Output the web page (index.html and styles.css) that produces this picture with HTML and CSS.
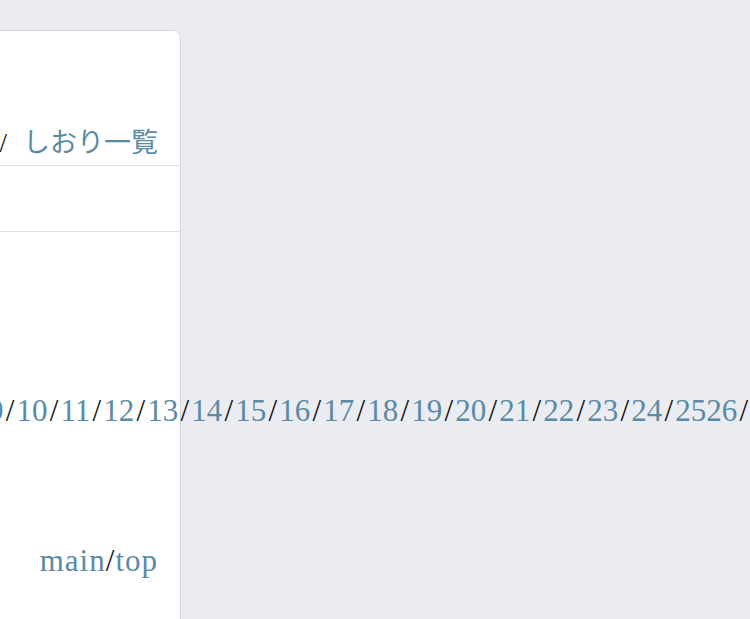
FILE: index.html
```html
<!DOCTYPE html>
<html lang="ja">
<head>
    <meta charset="UTF-8">
    <meta name="viewport" content="width=device-width, initial-scale=1.0">
    <title>しおり一覧</title>
    <link rel="stylesheet" href="styles.css">
</head>
<body>
    <div class="card">
        <div class="card-head">
            <a href="#">目次</a> <span class="head-sep">/</span><a href="#">しおり一覧</a>
        </div>
        <div class="card-sub"></div>
        <div class="card-body">
            <div class="pages">
                <a href="#">1</a><span class="sep">/</span><a href="#">2</a><span class="sep">/</span><a href="#">3</a><span class="sep">/</span><a href="#">4</a><span class="sep">/</span><a href="#">5</a><span class="sep">/</span><a href="#">6</a><span class="sep">/</span><a href="#">7</a><span class="sep">/</span><a href="#">8</a><span class="sep">/</span><a href="#">9</a><span class="sep">/</span><a href="#">10</a><span class="sep">/</span><a href="#">11</a><span class="sep">/</span><a href="#">12</a><span class="sep">/</span><a href="#">13</a><span class="sep">/</span><a href="#">14</a><span class="sep">/</span><a href="#">15</a><span class="sep">/</span><a href="#">16</a><span class="sep">/</span><a href="#">17</a><span class="sep">/</span><a href="#">18</a><span class="sep">/</span><a href="#">19</a><span class="sep">/</span><a href="#">20</a><span class="sep">/</span><a href="#">21</a><span class="sep">/</span><a href="#">22</a><span class="sep">/</span><a href="#">23</a><span class="sep">/</span><a href="#">24</a><span class="sep">/</span><a href="#">25</a><a href="#">26</a><span class="sep">/</span>
            </div>
            <div class="links">
                <a href="#">main</a>/<a href="#">top</a>
            </div>
        </div>
    </div>
</body>
</html>
```

FILE: styles.css
```css
body {
    margin: 0;
    padding-top: 30px;
    background-color: #ebecf1;
    font-family: "Liberation Serif", "Noto Sans CJK JP", serif;
    font-size: 31px;
    line-height: 40px;
    color: #111;
    overflow: hidden;
}
a {
    color: #5b8aa4;
    text-decoration: none;
}
.card {
    width: 444px;
    margin-left: -263px;
    background: white;
    border: 1px solid #d8d9de;
    border-bottom: none;
    border-radius: 8px 8px 0 0;
    box-sizing: border-box;
}
.card-head {
    padding: 94px 22px 4px;
    font-size: 27px;
    line-height: 36px;
    text-align: right;
    border-bottom: 1px solid #dddee2;
}
.head-sep {
    margin-right: 16px;
}
.card-sub {
    height: 65px;
    border-bottom: 1px solid #dddee2;
}
.card-body {
    padding: 159px 22px 80px;
}
.pages {
    white-space: nowrap;
}
.sep {
    margin: 0 2.2px;
}
.links {
    margin-top: 110px;
    text-align: right;
    letter-spacing: 1px;
}
```
